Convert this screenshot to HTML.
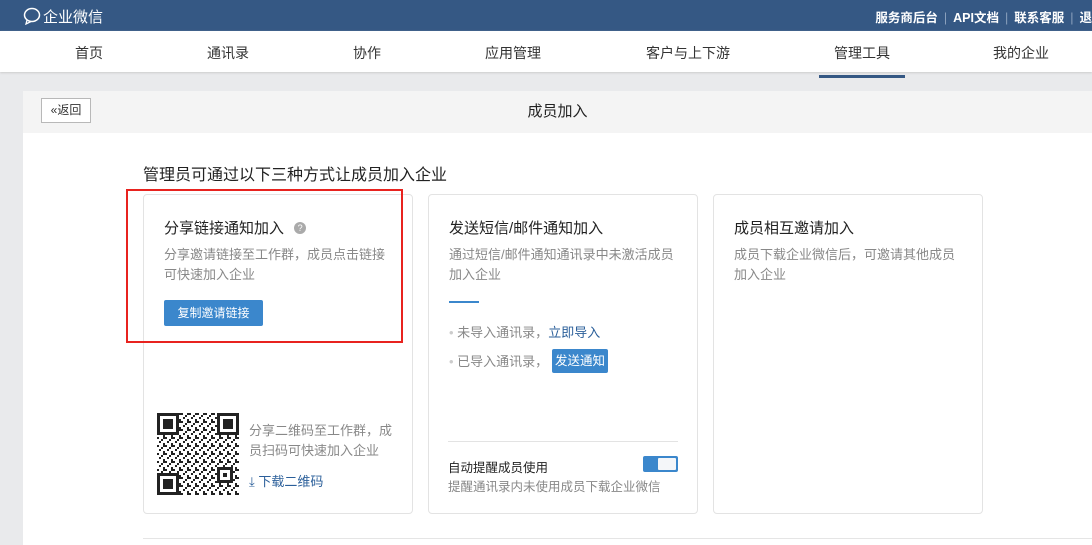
<!DOCTYPE html>
<html><head><meta charset="utf-8"><style>
*{margin:0;padding:0;box-sizing:border-box}
body{width:1092px;height:545px;overflow:hidden;background:#e9eaec;font-family:"Liberation Sans","Noto Sans CJK SC",sans-serif;position:relative}
.top{position:absolute;left:0;top:0;width:1092px;height:31px;background:#355884;color:#fff}
.logo{position:absolute;left:23px;top:6px;font-size:15px}
.rl{position:absolute;right:0;top:7px;font-size:12.5px;white-space:nowrap;font-weight:bold}
.rl span.s{color:#8aa0bd;margin:0 6px;font-weight:normal}
.nav{position:absolute;left:0;top:31px;width:1092px;height:41px;background:#fff;box-shadow:0 1px 2px #ccc}
.nav a{position:absolute;top:12px;font-size:14px;color:#333}
.nav .act{border-bottom:3px solid #355884;}
.panel{position:absolute;left:23px;top:91px;width:1069px;height:454px;background:#fff}
.ph{height:42px;background:#f4f4f4;text-align:center;font-size:15px;line-height:42px;color:#222}
.back{position:absolute;left:18px;top:7px;width:50px;height:25px;border:1px solid #b8b8b8;background:#fff;font-size:12px;line-height:23px;text-align:center;color:#333}
.card{position:absolute;top:194px;width:270px;height:320px;border:1px solid #e3e3e3;border-radius:4px;background:#fff}
.t{position:absolute;left:20px;top:22px;font-size:15px;color:#222}
.d{position:absolute;left:20px;top:50px;width:226px;font-size:13px;line-height:20px;color:#888}
.btn{background:#3b87cc;color:#fff;font-size:12px;border-radius:2px;position:absolute}
</style></head><body>
<div class="top"><div class="logo"><svg width="20" height="18" viewBox="0 0 20 18" style="vertical-align:-3px"><ellipse cx="9" cy="8" rx="7.5" ry="6.5" fill="none" stroke="#fff" stroke-width="1.5"/><path d="M4 13 L3 17 L8 14.5" fill="none" stroke="#fff" stroke-width="1.3"/></svg>企业微信</div>
<div class="rl">服务商后台<span class="s">|</span>API文档<span class="s">|</span>联系客服<span class="s">|</span>退</div></div>
<div class="nav"><a style="left:75px">首页</a><a style="left:207px">通讯录</a><a style="left:353px">协作</a><a style="left:485px">应用管理</a><a style="left:646px">客户与上下游</a><a style="left:819px;padding:0 15px 12px" class="act">管理工具</a><a style="left:993px">我的企业</a></div>
<div class="panel"><div class="ph">成员加入</div><div class="back">«返回</div>
<div style="position:absolute;left:120px;top:447px;width:949px;height:1px;background:#e5e5e5"></div></div>
<div style="position:absolute;left:143px;top:161px;font-size:16px;color:#222">管理员可通过以下三种方式让成员加入企业</div>
<div class="card" style="left:143px"><div class="t">分享链接通知加入 <span style="display:inline-block;width:12px;height:12px;border-radius:6px;background:#aaa;color:#fff;font-size:9px;text-align:center;line-height:12px;vertical-align:2px;margin-left:6px">?</span></div>
<div class="d">分享邀请链接至工作群，成员点击链接可快速加入企业</div>
<div class="btn" style="left:20px;top:105px;width:99px;height:26px;line-height:26px;text-align:center">复制邀请链接</div>
<svg style="position:absolute;left:13px;top:218px" width="82" height="82" viewBox="0 0 82 82"><defs><pattern id="q" width="8" height="8" patternUnits="userSpaceOnUse"><rect x="0" y="0" width="2" height="2" fill="#222"/><rect x="4" y="2" width="2" height="2" fill="#222"/><rect x="2" y="4" width="2" height="2" fill="#222"/><rect x="6" y="6" width="2" height="2" fill="#222"/><rect x="6" y="0" width="2" height="2" fill="#222"/></pattern></defs><rect width="82" height="82" fill="url(#q)"/><g fill="#222"><rect x="0" y="0" width="22" height="22"/><rect x="60" y="0" width="22" height="22"/><rect x="0" y="60" width="22" height="22"/><rect x="60" y="54" width="16" height="16"/></g><g fill="#fff"><rect x="3" y="3" width="16" height="16"/><rect x="63" y="3" width="16" height="16"/><rect x="3" y="63" width="16" height="16"/><rect x="63" y="57" width="10" height="10"/></g><g fill="#222"><rect x="6" y="6" width="10" height="10"/><rect x="66" y="6" width="10" height="10"/><rect x="6" y="66" width="10" height="10"/><rect x="66" y="60" width="4" height="4"/></g></svg>
<div style="position:absolute;left:105px;top:226px;width:148px;font-size:13px;line-height:20px;color:#888">分享二维码至工作群，成员扫码可快速加入企业</div>
<div style="position:absolute;left:105px;top:276px;font-size:13px;color:#2b5f9a">⤓ 下载二维码</div></div>
<div style="position:absolute;left:126px;top:189px;width:277px;height:154px;border:2px solid #e8231f"></div>
<div class="card" style="left:428px"><div class="t">发送短信/邮件通知加入</div>
<div class="d">通过短信/邮件通知通讯录中未激活成员加入企业</div>
<div style="position:absolute;left:20px;top:106px;width:30px;height:2px;background:#3b87cc"></div>
<div style="position:absolute;left:20px;top:127px;font-size:13px;color:#888"><span style="color:#ccc">•</span> 未导入通讯录，<span style="color:#2b5f9a">立即导入</span></div>
<div style="position:absolute;left:20px;top:156px;font-size:13px;color:#888"><span style="color:#ccc">•</span> 已导入通讯录，</div>
<div class="btn" style="left:123px;top:154px;width:56px;height:24px;line-height:24px;text-align:center;font-size:12.5px">发送通知</div>
<div style="position:absolute;left:19px;top:246px;width:230px;height:1px;background:#e3e3e3"></div>
<div style="position:absolute;left:19px;top:262px;font-size:12.5px;color:#222">自动提醒成员使用</div>
<div style="position:absolute;left:19px;top:281px;font-size:12.5px;color:#888">提醒通讯录内未使用成员下载企业微信</div>
<div style="position:absolute;left:214px;top:261px;width:35px;height:16px;background:#3b87cc;border-radius:2px"><div style="position:absolute;right:2px;top:2px;width:18px;height:12px;background:#f4f6f9;border-radius:1px"></div></div></div>
<div class="card" style="left:713px"><div class="t">成员相互邀请加入</div>
<div class="d">成员下载企业微信后，可邀请其他成员加入企业</div></div>
</body></html>
